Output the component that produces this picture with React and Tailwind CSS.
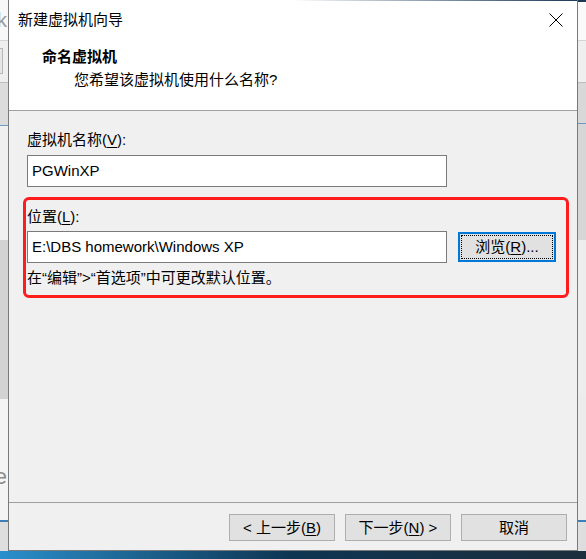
import React from "react";

function U({ children }) {
  return <span className="underline underline-offset-[2px] decoration-1">{children}</span>;
}

function LeftStrip() {
  return (
    <div className="w-[8px] flex flex-col overflow-hidden">
      <div className="h-[40px] bg-[#f8f8f8] flex items-center justify-end overflow-hidden">
        <span className="text-[20px] leading-[24px] text-[#9a9a9a] mr-[1px]">k</span>
      </div>
      <div className="h-[1px] bg-[#d4d4d4]" />
      <div className="h-[41px] bg-[#efefef] pt-[7px]">
        <div className="h-[26px] w-[3px] border-r border-y border-[#b8b8b8] bg-[#e6e6e6]" />
      </div>
      <div className="h-[1px] bg-[#bdbdbd]" />
      <div className="h-[42px] bg-[#dcdcdc]" />
      <div className="h-[1px] bg-[#6c9bc4]" />
      <div className="h-[114px] bg-[#efefef]" />
      <div className="h-[159px] bg-[#d3d3d3]" />
      <div className="h-[121px] bg-[#f4f4f4] flex items-end justify-end pb-[32px] overflow-hidden">
        <span className="text-[22px] leading-[22px] text-[#8a8a8a] mr-[1px]">e</span>
      </div>
      <div className="h-[2px] bg-[#3f7fb5]" />
      <div className="flex-1 bg-[#dedede]" />
    </div>
  );
}

function RightStrip() {
  return (
    <div className="w-[8px] flex flex-col overflow-hidden">
      <div className="h-[2px] bg-[#1c3a58]" />
      <div className="h-[38px] bg-[#fafafa]" />
      <div className="h-[1px] bg-[#d4d4d4]" />
      <div className="h-[41px] bg-[#efefef]" />
      <div className="h-[1px] bg-[#bdbdbd]" />
      <div className="h-[40px] bg-[#d8d8d8]" />
      <div className="h-[1px] bg-[#6c9bc4]" />
      <div className="h-[116px] bg-[#d6d6d6]" />
      <div className="h-[156px] bg-[#ededed]" />
      <div className="h-[124px] bg-[#ececec]" />
      <div className="h-[2px] bg-[#3f7fb5]" />
      <div className="flex-1 bg-[#dedede]" />
    </div>
  );
}

function FooterButton({ children }) {
  return (
    <div className="w-[106px] h-[27px] border border-[#adadad] bg-[#e1e1e1] flex items-center justify-center">
      {children}
    </div>
  );
}

export default function App() {
  return (
    <div className="w-[586px] h-[559px] overflow-hidden flex flex-col font-['Liberation_Sans','Noto_Sans_CJK_SC',sans-serif] text-[15px] leading-[20px] text-black">
      <div className="flex h-[551px]">
        <LeftStrip />
        <div className="w-[570px] flex flex-col border-x border-b border-[#7a7a7a] bg-[#f0f0f0]">
          <div className="h-[1px] bg-gradient-to-r from-white via-white to-[#1c3a58]" />
          <div className="h-[39px] bg-white flex items-center justify-between pl-[9px] pr-[14px]">
            <span className="mt-[-1px]">新建虚拟机向导</span>
            <svg width="14" height="14" viewBox="0 0 14 14" className="mt-[-1px]">
              <path d="M0.5 0.5 L13.5 13.5 M13.5 0.5 L0.5 13.5" stroke="#000" strokeWidth="1" fill="none" />
            </svg>
          </div>
          <div className="h-[70px] bg-white flex flex-col pt-[7px]">
            <div className="pl-[33px] font-bold">命名虚拟机</div>
            <div className="pl-[65px] mt-[3px]">您希望该虚拟机使用什么名称?</div>
          </div>
          <div className="h-[1px] bg-[#a0a0a0]" />
          <div className="flex-1 flex flex-col px-[18px] pt-[19px]">
            <div>
              虚拟机名称(<U>V</U>):
            </div>
            <div className="mt-[5px] h-[32px] w-[420px] border border-[#7a7a7a] bg-white pl-[4px] flex items-center">
              PGWinXP
            </div>
            <div className="mt-[10px] ml-[-4px] mr-[-10px] border-[3px] border-[#fe1c1c] rounded-[6px] pl-[1px] pt-[7px] pb-[7px] flex flex-col">
              <div>
                位置(<U>L</U>):
              </div>
              <div className="mt-[4px] flex items-center">
                <div className="h-[32px] w-[420px] border border-[#7a7a7a] bg-white pl-[4px] flex items-center">
                  E:\DBS homework\Windows XP
                </div>
                <div className="ml-[11px] w-[98px] h-[30px] border-2 border-[#0078d7] bg-[#e1e1e1] p-[1px]">
                  <div className="h-full w-full border border-dotted border-black flex items-center justify-center">
                    浏览(<U>R</U>)...
                  </div>
                </div>
              </div>
              <div className="mt-[5px]">在“编辑”&gt;“首选项”中可更改默认位置。</div>
            </div>
          </div>
          <div className="h-[1px] bg-[#a0a0a0]" />
          <div className="h-[47px] flex justify-end items-start pt-[11px] pr-[10px] gap-[10px]">
            <FooterButton>
              &lt; 上一步(<U>B</U>)
            </FooterButton>
            <FooterButton>
              下一步(<U>N</U>) &gt;
            </FooterButton>
            <FooterButton>取消</FooterButton>
          </div>
        </div>
        <RightStrip />
      </div>
      <div className="flex-1 bg-gradient-to-r from-[#2a8fcc] via-[#0e3552] to-[#1b2e3c]" />
    </div>
  );
}
